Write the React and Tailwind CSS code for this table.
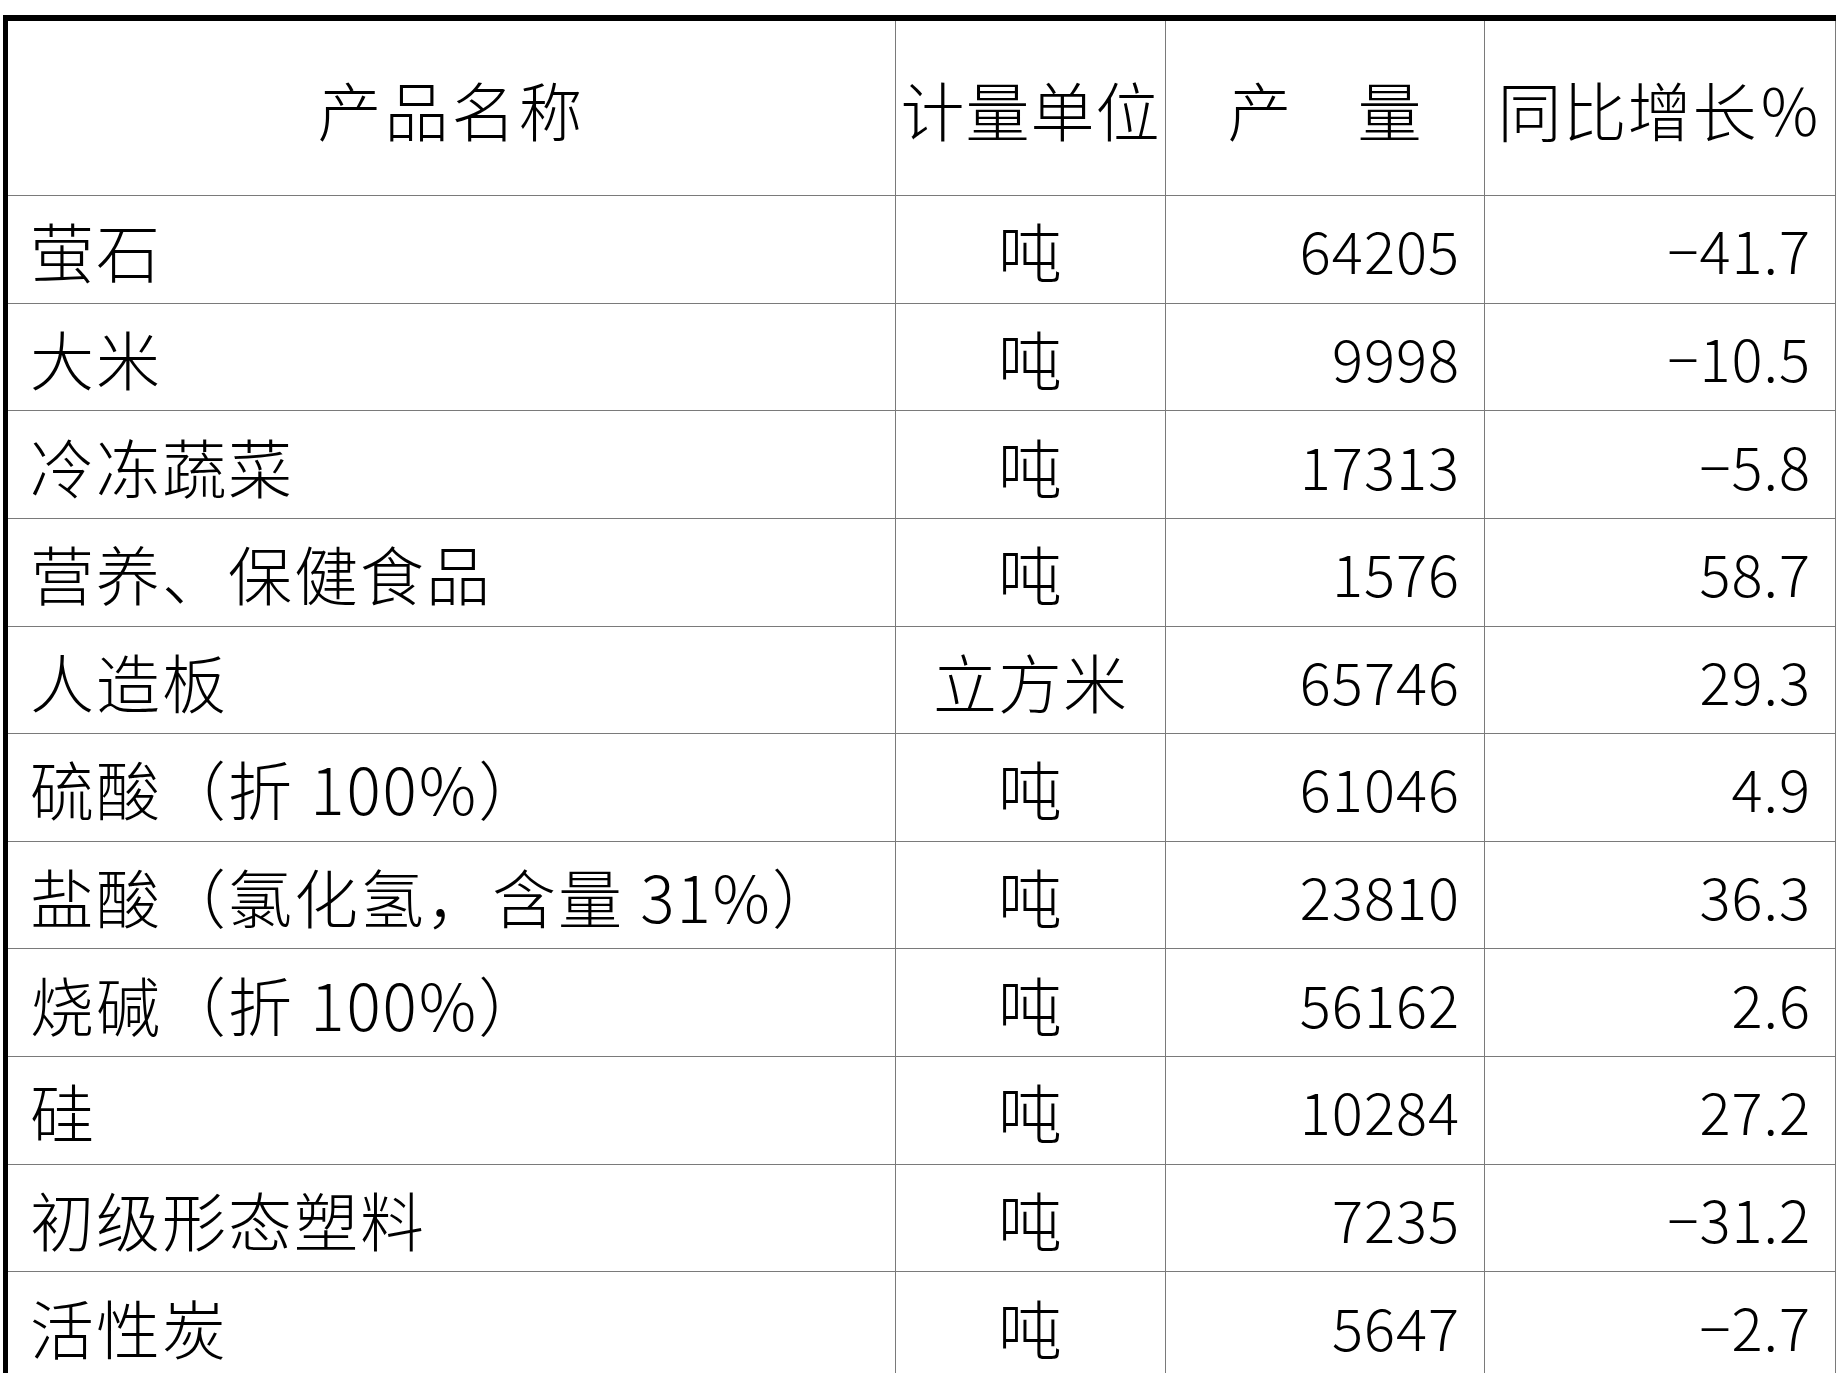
import React from 'react';

const rows = [
  { name: '萤石', unit: '吨', output: '64205', growth: '−41.7' },
  { name: '大米', unit: '吨', output: '9998', growth: '−10.5' },
  { name: '冷冻蔬菜', unit: '吨', output: '17313', growth: '−5.8' },
  { name: '营养、保健食品', unit: '吨', output: '1576', growth: '58.7' },
  { name: '人造板', unit: '立方米', output: '65746', growth: '29.3' },
  { name: '硫酸（折 100%）', unit: '吨', output: '61046', growth: '4.9' },
  { name: '盐酸（氯化氢，含量 31%）', unit: '吨', output: '23810', growth: '36.3' },
  { name: '烧碱（折 100%）', unit: '吨', output: '56162', growth: '2.6' },
  { name: '硅', unit: '吨', output: '10284', growth: '27.2' },
  { name: '初级形态塑料', unit: '吨', output: '7235', growth: '−31.2' },
  { name: '活性炭', unit: '吨', output: '5647', growth: '−2.7' },
];

const font = "font-['Noto_Sans_CJK_SC',sans-serif] font-light";

const App = () => {
  return (
    <div className={`min-h-screen bg-white pt-[15px] pl-[3px] text-black ${font}`}>
      <div className="w-[1833px] border-l-[5px] border-t-[6px] border-black">
        {/* header */}
        <div className="flex h-[175px] text-[64px] leading-none">
          <div className="w-[888px] flex items-center justify-center border-r border-b border-[#7a7a7a] tracking-[3px]">
            产品名称
          </div>
          <div className="w-[270px] flex items-center justify-center border-r border-b border-[#7a7a7a] tracking-[1px]">
            计量单位
          </div>
          <div className="w-[319px] flex items-center justify-center border-r border-b border-[#7a7a7a] tracking-[1px]">
            产　量
          </div>
          <div className="w-[351px] flex items-center justify-center border-r border-b border-[#7a7a7a] tracking-[1px]">
            同比增长％
          </div>
        </div>

        {rows.map((row) => (
          <div key={row.name} className="flex h-[107.64px] leading-none">
            <div className="w-[888px] flex items-center border-r border-b border-[#7a7a7a] pl-[22px] text-[64px] tracking-[2px] whitespace-nowrap">
              {row.name}
            </div>
            <div className="w-[270px] flex items-center justify-center border-r border-b border-[#7a7a7a] text-[64px] tracking-[1px]">
              {row.unit}
            </div>
            <div className="w-[319px] flex items-center justify-end border-r border-b border-[#7a7a7a] pr-[24px] text-[58px] tracking-[1px]">
              {row.output}
            </div>
            <div className="w-[351px] flex items-center justify-end border-r border-b border-[#7a7a7a] pr-[24px] text-[58px] tracking-[1px]">
              {row.growth}
            </div>
          </div>
        ))}
      </div>
    </div>
  );
};

export default App;
